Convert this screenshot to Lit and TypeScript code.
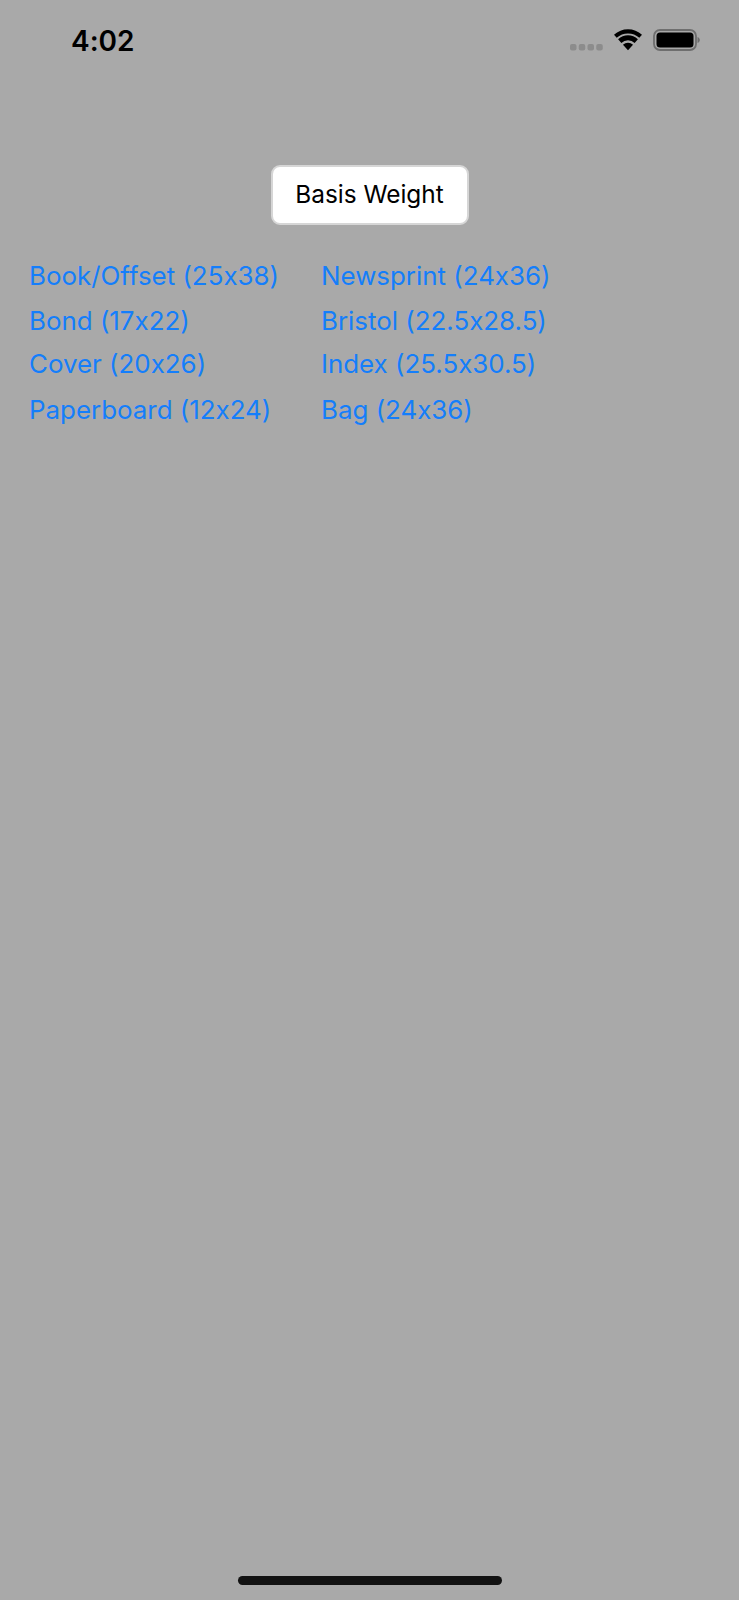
import { LitElement, html, css, svg } from "lit";
import { customElement } from "lit/decorators.js";

const rows: [string, string, number][] = [
  ["Book/Offset (25x38)", "Newsprint (24x36)", 46],
  ["Bond (17x22)", "Bristol (22.5x28.5)", 44],
  ["Cover (20x26)", "Index (25.5x30.5)", 42],
  ["Paperboard (12x24)", "Bag (24x36)", 50],
];

@customElement("app-root")
export class AppRoot extends LitElement {
  static styles = css`
    :host { display: block; width: 739px; height: 1600px; background: #a9a9a9; font-family: "Inter", "Liberation Sans", sans-serif; font-feature-settings: "calt" 0; overflow: hidden; }
    .page { height: 1600px; display: flex; flex-direction: column; }
    .status { height: 80px; display: flex; align-items: center; justify-content: space-between; padding: 0 39px 0 71px; box-sizing: border-box; }
    .time { font-size: 28px; font-weight: 600; color: #000; padding-top: 2px; }
    .icons { display: flex; align-items: center; gap: 11px; }
    .title-wrap { display: flex; justify-content: center; padding-top: 85px; }
    .title { width: 198px; height: 60px; box-sizing: border-box; background: #fff; border: 2px solid #d6d6d6; border-radius: 9px; display: flex; align-items: center; justify-content: center; font-size: 24.4px; color: #000; padding-bottom: 3px; }
    .list { padding: 27px 0 0 29px; display: flex; flex-direction: column; }
    .row { display: grid; grid-template-columns: 292px auto; align-items: center; font-size: 25.9px; color: #147efb; }
    .spacer { flex: 1; }
    .home { align-self: center; width: 264px; height: 9px; border-radius: 5px; background: #121212; margin-bottom: 15px; }
  `;
  render() {
    return html`<div class="page">
      <div class="status">
        <span class="time">4:02</span>
        <div class="icons">
          <svg width="33" height="22" viewBox="0 0 33 22">
            ${[0, 8.75, 17.5, 26.25].map((x) => svg`<rect x=${x} y="15" width="6.5" height="6.5" rx="2" fill="#8c8c8c"/>`)}
          </svg>
          <svg width="28" height="22" viewBox="0 0 30 22"><path fill="#000" d="M15 22 L9.6 16 A8 8 0 0 1 20.4 16Z M7.9 14.1 L4.4 10.2 A15.5 15.5 0 0 1 25.6 10.2 L22.1 14.1 A10.5 10.5 0 0 0 7.9 14.1Z M2.9 8.6 L0 5.4 A22 22 0 0 1 30 5.4 L27.1 8.6 A18 18 0 0 0 2.9 8.6Z"/></svg>
          <svg width="47" height="22" viewBox="0 0 47 22"><rect x="1" y="1" width="42" height="20" rx="6" fill="none" stroke="#6e6e6e" stroke-width="1.8"/><rect x="3.5" y="3.5" width="37" height="15" rx="3.5" fill="#000"/><path d="M44.5 8 C46 8.5 46.8 9.7 46.8 11 C46.8 12.3 46 13.5 44.5 14Z" fill="#6e6e6e"/></svg>
        </div>
      </div>
      <div class="title-wrap"><div class="title">Basis Weight</div></div>
      <div class="list">
        ${rows.map((r) => html`<div class="row" style="height:${r[2]}px"><span>${r[0]}</span><span>${r[1]}</span></div>`)}
      </div>
      <div class="spacer"></div>
      <div class="home"></div>
    </div>`;
  }
}
